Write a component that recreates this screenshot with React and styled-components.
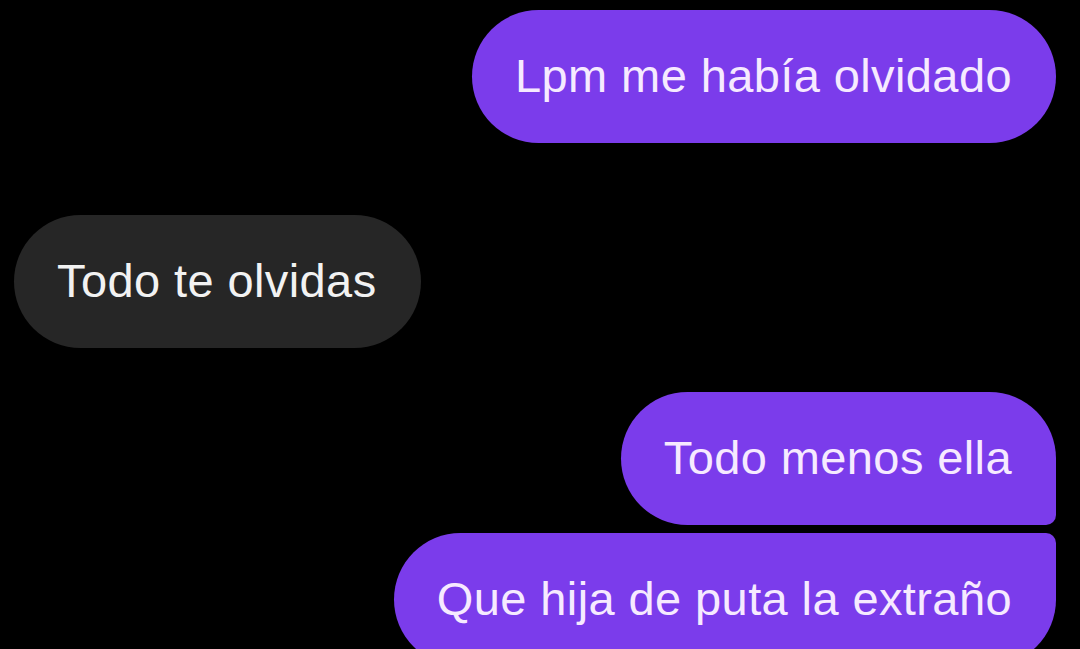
import React from 'react';
import styled, { createGlobalStyle } from 'styled-components';

const GlobalStyle = createGlobalStyle`
  html, body {
    margin: 0;
    padding: 0;
    background: #000;
    height: 100%;
    overflow: hidden;
  }
`;

const Thread = styled.div`
  display: flex;
  flex-direction: column;
  width: 1080px;
  height: 649px;
  box-sizing: border-box;
  padding: 10px 24px 0 14px;
  background: #000;
  font-family: "Liberation Sans", Arial, sans-serif;
  overflow: hidden;
`;

const Bubble = styled.div`
  display: flex;
  align-items: center;
  flex-shrink: 0;
  box-sizing: border-box;
  height: 133px;
  padding: 0 44px 2px 43px;
  font-size: 47px;
  letter-spacing: 0.4px;
  white-space: nowrap;
  align-self: ${p => (p.$mine ? 'flex-end' : 'flex-start')};
  background: ${p => (p.$mine ? '#7b3ceb' : '#262626')};
  color: ${p => (p.$mine ? '#f6eaff' : '#f2f2f2')};
  margin-top: ${p => p.$gap || 0}px;
  border-radius: ${p => p.$corners || '67px'};
`;

const messages = [
  { text: 'Lpm me había olvidado', mine: true, gap: 0 },
  { text: 'Todo te olvidas', mine: false, gap: 72 },
  { text: 'Todo menos ella', mine: true, gap: 44, corners: '67px 67px 10px 67px' },
  { text: 'Que hija de puta la extraño', mine: true, gap: 8, corners: '67px 10px 67px 67px' },
];

export default function App() {
  return (
    <>
      <GlobalStyle />
      <Thread>
        {messages.map((m, i) => (
          <Bubble key={i} $mine={m.mine} $gap={m.gap} $corners={m.corners}>
            {m.text}
          </Bubble>
        ))}
      </Thread>
    </>
  );
}
